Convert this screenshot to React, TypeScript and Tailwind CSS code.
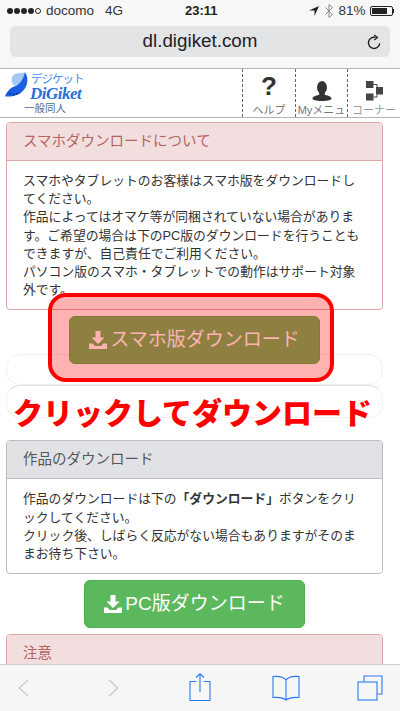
const jp = '"Liberation Sans", "Noto Sans CJK JP", sans-serif'

const DownloadIcon = ({ className }: { className: string }) => (
  <svg viewBox="0 0 18 18" className={className} fill="currentColor">
    <path d="M6.500 0h5v6.500h4L9 13 2.500 6.500h4z" />
    <path d="M0 12.500h3.500L6 15h6l2.500-2.500H18V18H0z" />
  </svg>
)

const StatusBar = () => (
  <div className="relative flex h-[22px] items-center justify-between pl-[7px] pr-[6px] text-[13.500px] text-[#222]">
    <div className="flex items-center gap-[1px]">
      {[0, 1, 2, 3].map(i => (
        <span key={i} className="h-[6px] w-[6px] rounded-full bg-[#222]" />
      ))}
      <span className="h-[6px] w-[6px] rounded-full border border-[#222]" />
      <span className="ml-[4px] text-[#333]">docomo</span>
      <span className="ml-[10px] text-[#333]">4G</span>
    </div>
    <span className="absolute left-[185px] text-[13px] font-bold">23:11</span>
    <div className="flex items-center">
      <svg viewBox="0 0 10 10" className="h-[10px] w-[10px]" fill="#222">
        <path d="M10 0 5.500 10V4.500H0z" />
      </svg>
      <svg viewBox="0 0 8 14" className="ml-[6px] h-[14px] w-[8px]" fill="none" stroke="#888" strokeWidth="1">
        <path d="M.5 3.500l7 7L4 13.500V.5l3.500 3-7 7" />
      </svg>
      <span className="ml-[5px] text-[#333]">81%</span>
      <span className="ml-[4px] flex h-[10px] w-[23px] rounded-[2px] border border-[#222] p-[1px]">
        <span className="h-full w-[81%] bg-[#222]" />
      </span>
      <span className="h-[4px] w-[1.500px] bg-[#222]" />
    </div>
  </div>
)

const UrlBar = () => (
  <div className="relative mx-[10px] mt-[4px] flex h-[31px] items-center justify-center rounded-[6px] bg-[#e3e4e6]">
    <span className="text-[18.800px] text-[#222]">dl.digiket.com</span>
    <svg viewBox="0 0 16 16" className="absolute right-[8px] h-[16px] w-[15px]" fill="none" stroke="#222" strokeWidth="1.500">
      <path d="M13.500 9.500A6 6 0 1 1 9 3.100" />
      <path d="M7.800.6 11 3.200 7.800 5.800" />
    </svg>
  </div>
)

const NavItem = ({ label, width, labelColor, children }: { label: string; width: string; labelColor: string; children: React.ReactNode }) => (
  <div className={`flex flex-col items-center border-l border-dashed border-[#666] ${width}`}>
    <div className="flex h-[33px] items-end justify-center">{children}</div>
    <span className={`mt-[2px] whitespace-nowrap text-[11px] leading-[14px] ${labelColor}`}>{label}</span>
  </div>
)

const SiteHeader = () => (
  <div className="flex h-[50px] shrink-0 justify-between border-y border-[#b4b4b4] bg-white">
    <div className="relative w-[90px]">
      <svg viewBox="0 0 30 30" className="absolute left-[5px] top-[1px] h-[30px] w-[26px]">
        <path d="M10 3C16 1 21 1 23 1 24 8 19 14 13 16 7 16 6 8 10 3Z" fill="#a5c9f5" />
        <path d="M23 0C29 9 25 20 17 25 11 28 4 29 0 28 3 21 8 17 13 16 18 13 22 7 23 0Z" fill="#1b5fe0" />
        <g fill="#0a2a70">
          <circle cx="6" cy="25" r="1" />
          <circle cx="10" cy="26" r="1" />
          <circle cx="14" cy="25" r="1" />
        </g>
      </svg>
      <span className="absolute left-[31px] top-[4px] whitespace-nowrap text-[11.500px] leading-[13px] tracking-[-1px] text-[#4a8df0]">デジケット</span>
      <span className="absolute left-[30px] top-[17px] text-[17px] font-bold italic leading-[15px] tracking-[-0.5px] text-[#2a6fdc]" style={{ fontFamily: '"Liberation Serif", serif' }}>DiGiket</span>
      <span className="absolute left-[24px] top-[32px] whitespace-nowrap text-[10.500px] leading-[14px] text-[#4c6a90]">一般同人</span>
    </div>
    <div className="flex">
      <NavItem label="ヘルプ" width="w-[53px]" labelColor="text-[#777]">
        <span className="text-[26px] font-bold leading-[30px] text-[#333]">?</span>
      </NavItem>
      <NavItem label="Myメニュ" width="w-[52px]" labelColor="text-[#777]">
        <svg viewBox="0 0 20 20" className="h-[20px] w-[20px]" fill="#333">
          <ellipse cx="10" cy="6.500" rx="5" ry="6.500" />
          <path d="M7.500 11h5l.5 3c4 .5 6.500 2 6.500 3.500S16 20 10 20 .5 19 .5 17.500 3 14.500 7 14z" />
        </svg>
      </NavItem>
      <NavItem label="コーナー" width="w-[53px]" labelColor="text-[#999]">
        <svg viewBox="0 0 17 20" className="h-[20px] w-[17px]" fill="#444">
          <rect x="0" y="0" width="7.500" height="7" />
          <rect x="0" y="12.500" width="7.500" height="7" />
          <rect x="10" y="6" width="7" height="7.500" />
          <path d="M7.500 3.500H11V6M7.500 16H11v-2.500" fill="none" stroke="#444" />
        </svg>
      </NavItem>
    </div>
  </div>
)

const Panel = ({ title, tone, children }: { title: string; tone: 'red' | 'gray'; children?: React.ReactNode }) => (
  <div className={`mx-[6px] overflow-hidden rounded-[4px] border bg-white ${tone === 'red' ? 'border-[#dca7a7]' : 'border-[#bdbdbd]'}`}>
    <div className={`flex h-[38px] items-center border-b px-[16px] text-[14.500px] ${tone === 'red' ? 'border-[#dca7a7] bg-[#f2dede] text-[#b5655f]' : 'border-[#bdbdbd] bg-[#e0e2e6] text-[#555]'}`}>
      {title}
    </div>
    {children && <div className="px-[16px] pb-[10px] pt-[11px] text-[12.800px] leading-[18.200px] text-[#333]">{children}</div>}
  </div>
)

const GreenButton = ({ label, width }: { label: string; width: string }) => (
  <div className={`relative z-10 mx-auto flex h-[48px] items-center justify-center gap-[3px] rounded-[6px] border border-[#4cae4c] bg-[#5cb85c] text-[19px] text-white ${width}`}>
    <DownloadIcon className="h-[18px] w-[18px]" />
    <span>{label}</span>
  </div>
)

const BottomBar = () => (
  <div className="flex h-[47px] shrink-0 items-center border-t border-[#cfcfcf] bg-[#f6f6f6] pl-[18px]">
    <svg viewBox="0 0 12 20" className="h-[20px] w-[11px]" fill="none" stroke="#c9c9c9" strokeWidth="1.400">
      <path d="M11 1 1.500 10 11 19" />
    </svg>
    <svg viewBox="0 0 12 20" className="ml-[79px] h-[20px] w-[11px]" fill="none" stroke="#c9c9c9" strokeWidth="1.400">
      <path d="M1 1l9.500 9L1 19" />
    </svg>
    <svg viewBox="0 0 22 28" className="mb-[2px] ml-[70px] h-[28px] w-[22px]" fill="none" stroke="#2a78ef" strokeWidth="1.100">
      <path d="M7.500 8.500H1v19h20v-19h-6.500" />
      <path d="M11 19V1M7 4.500 11 .8l4 3.700" />
    </svg>
    <svg viewBox="0 0 28 26" className="ml-[61px] h-[26px] w-[28px]" fill="none" stroke="#2a78ef" strokeWidth="1.100">
      <path d="M14 5C12 2 8 1 1 1.500v21c6-.5 10 0 13 2.500 3-2.500 7-3 13-2.500v-21C20 1 16 2 14 5v20" />
    </svg>
    <svg viewBox="0 0 26 26" className="ml-[57px] h-[26px] w-[26px]" fill="none" stroke="#2a78ef" strokeWidth="1.100">
      <path d="M7 6.500V1h18v18h-5" />
      <rect x="1" y="7" width="19" height="18" />
    </svg>
  </div>
)

export default function App() {
  return (
    <div className="relative flex h-[711px] w-[400px] flex-col overflow-hidden bg-white" style={{ fontFamily: jp }}>
      <div className="h-[68px] shrink-0 bg-[#f7f7f7]">
        <StatusBar />
        <UrlBar />
      </div>
      <SiteHeader />
      <div className="min-h-0 w-[389px] flex-1 overflow-hidden pt-[4px]">
        <Panel title="スマホダウンロードについて" tone="red">
          スマホやタブレットのお客様はスマホ版をダウンロードしてください。<br />
          作品によってはオマケ等が同梱されていない場合があります。ご希望の場合は下のPC版のダウンロードを行うこともできますが、自己責任でご利用ください。<br />
          パソコン版のスマホ・タブレットでの動作はサポート対象外です。
        </Panel>

        <div className="relative mt-[6px]">
          <GreenButton label="スマホ版ダウンロード" width="w-[251px]" />
          <div className="absolute left-[48px] top-[-23px] z-20 h-[89px] w-[286px] rounded-[18px] border-4 border-[#ff0000] bg-[#ff0000]/30" />
        </div>

        <div className="relative mt-[-10px]">
          <div className="mx-[6px] h-[31px] rounded-[14px] border border-[#f1f1f1]" />
          <div className="mx-[6px] h-[33px] rounded-[14px] border border-[#f1f1f1] border-t-[#dedede]" />
          <span className="absolute left-[13px] top-[45px] whitespace-nowrap text-[30px] font-black leading-[30px] text-[#ff0000]">クリックしてダウンロード</span>
        </div>

        <div className="mt-[22px]">
          <Panel title="作品のダウンロード" tone="gray">
            作品のダウンロードは下の<b>「ダウンロード」</b>ボタンをクリックしてください。<br />
            クリック後、しばらく反応がない場合もありますがそのままお待ち下さい。
          </Panel>
        </div>

        <div className="mt-[6px]">
          <GreenButton label="PC版ダウンロード" width="w-[221px]" />
        </div>

        <div className="mt-[6px]">
          <Panel title="注意" tone="red" />
        </div>
      </div>
      <BottomBar />
    </div>
  )
}
